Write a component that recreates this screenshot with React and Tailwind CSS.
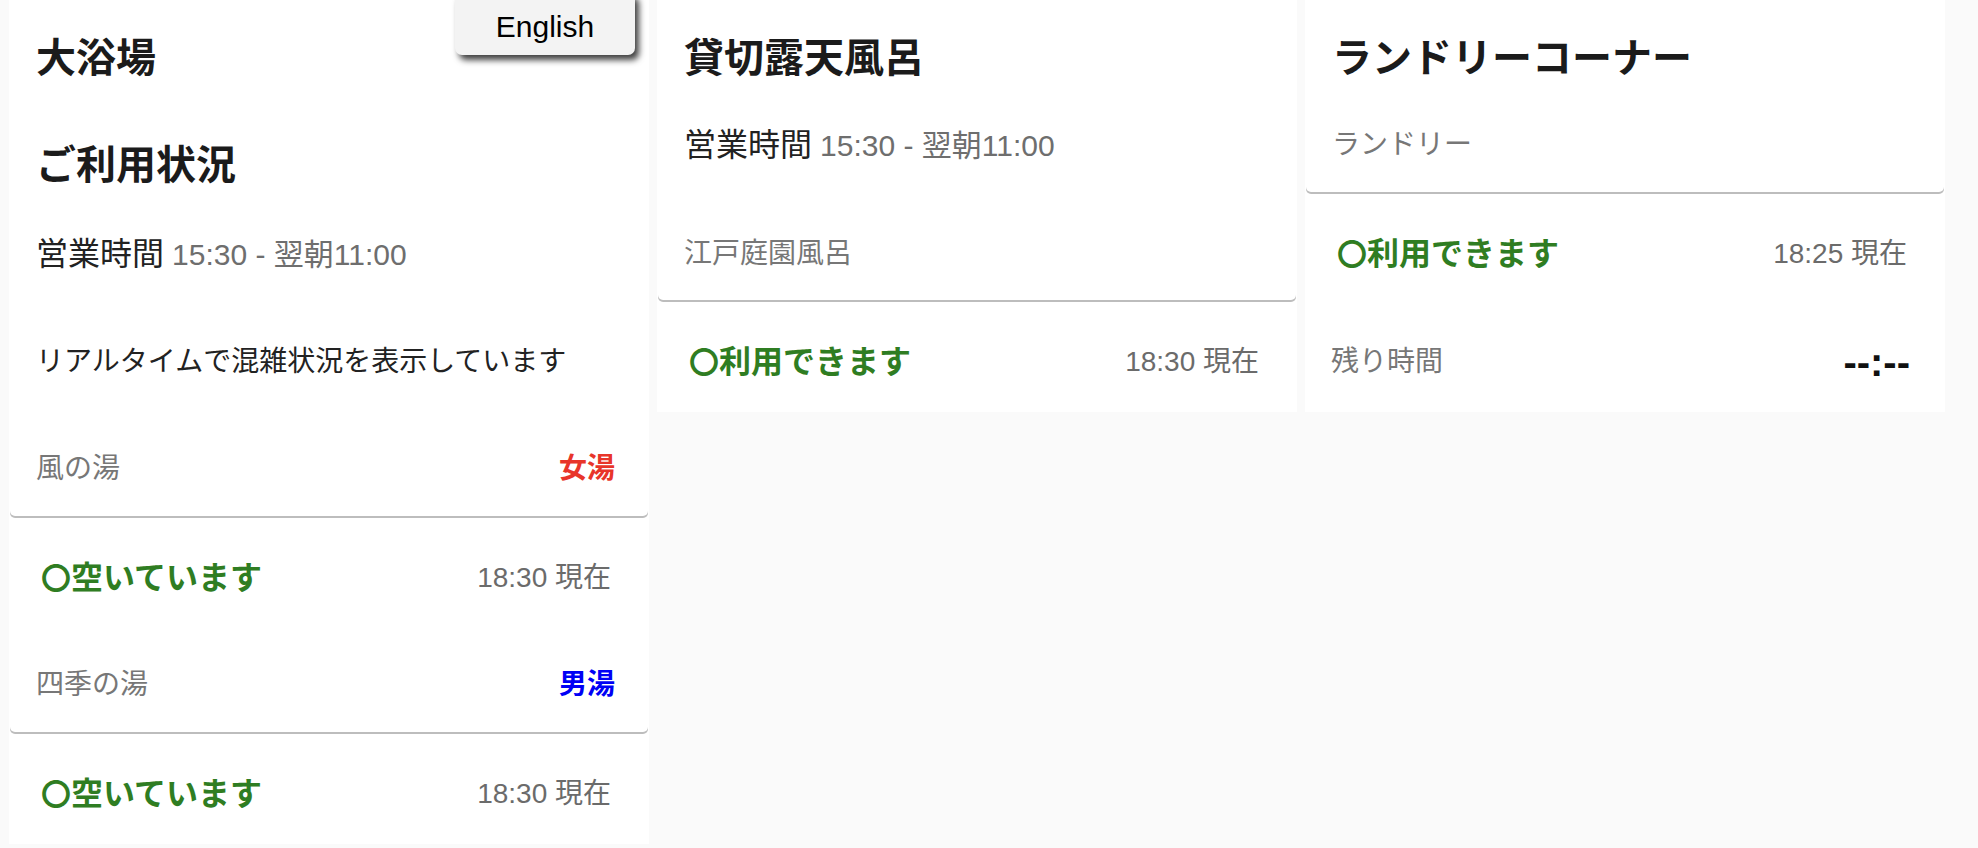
import React from 'react';

const font = "font-['Liberation_Sans','Noto_Sans_CJK_JP',sans-serif]";

// upper block of a card: white panel with a thin shadow under its rounded bottom
const HeaderBox = ({ children }) => (
    <div className="relative z-10 mx-[1px] rounded-b-[5px] bg-white shadow-[0_2px_0_0_#bdbdbd]">
        {children}
    </div>
);

const Title = ({ children }) => (
    <div className="flex h-[116px] items-center px-[26px] text-[40px] font-bold text-[#1b1b1b]">
        {children}
    </div>
);

const Hours = ({ className }) => (
    <div className={`flex items-center px-[26px] ${className}`}>
        <span className="text-[32px] text-[#222]">営業時間</span>
        <span className="ml-[8px] text-[30px] text-[#6e6e6e]">15:30 - 翌朝11:00</span>
    </div>
);

const Status = ({ label, time }) => (
    <div className="flex h-[112px] items-center justify-between pt-[12px] pl-[32px] pr-[38px]">
        <span className="text-[32px] font-bold text-[#2f7d22]">
            <span className="text-[30px] font-['Noto_Sans_CJK_JP',sans-serif]">〇</span>
            {label}
        </span>
        <span className="text-[28px] text-[#6b6b6b]">{time}</span>
    </div>
);

const BathRow = ({ name, tag, tagColor, className }) => (
    <div className={`flex items-center justify-between pl-[26px] pr-[33px] ${className}`}>
        <span className="text-[28px] text-[#777]">{name}</span>
        <span className={`text-[28px] font-bold ${tagColor}`}>{tag}</span>
    </div>
);

export default function App() {
    return (
        <div className={`relative min-h-screen overflow-hidden bg-[#fafafa] ${font}`}>
            <div className="flex items-start gap-[8px] pl-[9px]">
                {/* 大浴場 */}
                <div className="w-[640px] bg-white">
                    <HeaderBox>
                        <Title>大浴場</Title>
                        <div className="flex h-[98px] items-center px-[26px] text-[40px] font-bold text-[#1b1b1b]">
                            ご利用状況
                        </div>
                        <Hours className="h-[80px]" />
                        <div className="flex h-[136px] items-center px-[26px] text-[28px] text-[#222]">
                            リアルタイムで混雑状況を表示しています
                        </div>
                        <BathRow name="風の湯" tag="女湯" tagColor="text-[#e8352a]" className="h-[86px] pb-[8px]" />
                    </HeaderBox>
                    <Status label="空いています" time="18:30 現在" />
                    <HeaderBox>
                        <BathRow name="四季の湯" tag="男湯" tagColor="text-[#0000f5]" className="h-[104px] pt-[10px]" />
                    </HeaderBox>
                    <Status label="空いています" time="18:30 現在" />
                </div>

                {/* 貸切露天風呂 */}
                <div className="w-[640px] bg-white">
                    <HeaderBox>
                        <Title>貸切露天風呂</Title>
                        <Hours className="h-[58px]" />
                        <div className="flex h-[126px] items-center px-[26px] pt-[34px] text-[28px] text-[#777]">
                            江戸庭園風呂
                        </div>
                    </HeaderBox>
                    <Status label="利用できます" time="18:30 現在" />
                </div>

                {/* ランドリー */}
                <div className="w-[640px] bg-white">
                    <HeaderBox>
                        <Title>ランドリーコーナー</Title>
                        <div className="flex h-[76px] items-center px-[26px] pb-[18px] text-[28px] text-[#777]">
                            ランドリー
                        </div>
                    </HeaderBox>
                    <Status label="利用できます" time="18:25 現在" />
                    <div className="flex h-[108px] items-center justify-between pt-[8px] pl-[26px] pr-[35px]">
                        <span className="text-[28px] text-[#777]">残り時間</span>
                        <span className="text-[40px] leading-none font-bold text-[#111]">--:--</span>
                    </div>
                </div>
            </div>

            <button className="absolute top-[-8px] left-[455px] z-20 flex h-[63px] w-[180px] items-center justify-center rounded-[7px] bg-[#f3f3f3] pt-[6px] text-[30px] text-black shadow-[4px_5px_6px_rgba(0,0,0,0.75)]">
                English
            </button>
        </div>
    );
}
